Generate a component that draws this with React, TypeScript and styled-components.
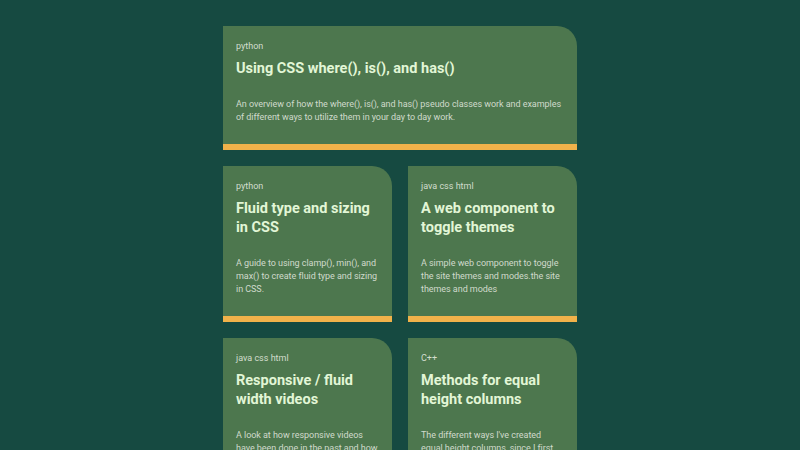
import React from 'react'
import styled, { createGlobalStyle } from 'styled-components'

const posts = [
  {
    tags: 'python',
    title: 'Using CSS where(), is(), and has()',
    text: 'An overview of how the where(), is(), and has() pseudo classes work and examples of different ways to utilize them in your day to day work.',
    wide: true,
  },
  {
    tags: 'python',
    title: 'Fluid type and sizing in CSS',
    text: 'A guide to using clamp(), min(), and max() to create fluid type and sizing in CSS.',
  },
  {
    tags: 'java css html',
    title: 'A web component to toggle themes',
    text: 'A simple web component to toggle the site themes and modes.the site themes and modes',
  },
  {
    tags: 'java css html',
    title: 'Responsive / fluid width videos',
    text: 'A look at how responsive videos have been done in the past and how to do them today with aspect-ratio.',
  },
  {
    tags: 'C++',
    title: 'Methods for equal height columns',
    text: "The different ways I've created equal height columns, since I first started building layouts for the web.",
  },
]

const GlobalStyle = createGlobalStyle`
  html, body {
    margin: 0;
    background: #164a41;
    font-family: Roboto, "Noto Sans", sans-serif;
  }
`

const App: React.FC = () => (
  <>
    <GlobalStyle />
    <Grid>
      {posts.map(post => (
        <Card key={post.title} wide={post.wide}>
          <Tags>{post.tags}</Tags>
          <Title>{post.title}</Title>
          <Text>{post.text}</Text>
        </Card>
      ))}
    </Grid>
  </>
)

export default App

const Grid = styled.main`
  width: 354px;
  margin: 26px auto 0;
  display: grid;
  grid-template-columns: 1fr 1fr;
  gap: 16px;
`
const Card = styled.article<{ wide?: boolean }>`
  grid-column: ${props => (props.wide ? '1 / -1' : 'auto')};
  background-color: #4d774e;
  border-top-right-radius: 20px;
  border-bottom: 6px solid #f1b24a;
  padding: 14px 13px 20px;
  display: flex;
  flex-direction: column;
`
const Tags = styled.span`
  font-size: 9px;
  line-height: 12px;
  color: #d2ddcd;
`
const Title = styled.h2`
  margin: 7px 0 0;
  font-size: 14.5px;
  line-height: 19px;
  font-weight: 700;
  color: #e2f6d6;
`
const Text = styled.p`
  margin: 20px 0 0;
  font-size: 9px;
  line-height: 13px;
  color: #d0dacc;
  letter-spacing: -0.05px;
`
